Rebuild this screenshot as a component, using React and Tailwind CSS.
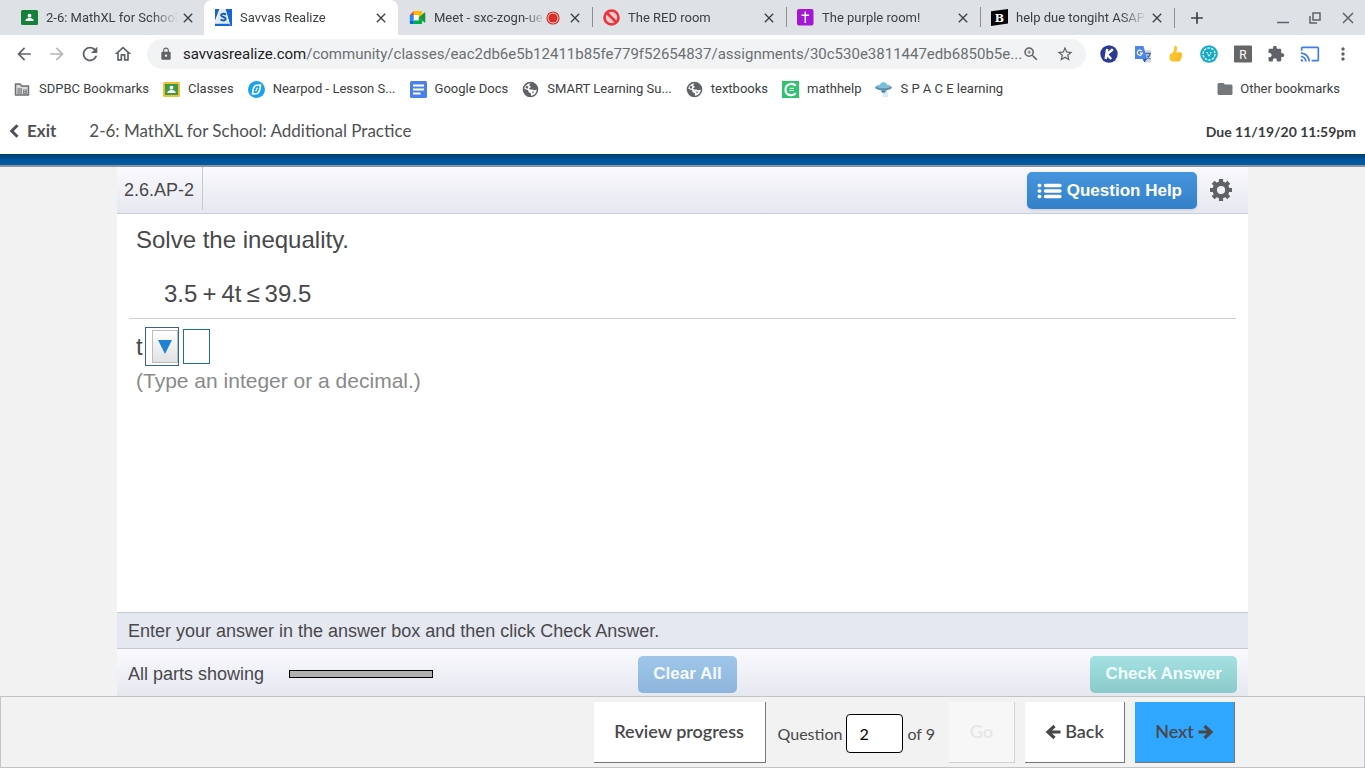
import React from "react";
import {
  MdArrowBack, MdArrowForward, MdRefresh, MdOutlineHome, MdLock, MdZoomIn, MdStarBorder,
  MdExtension, MdCast, MdMoreVert, MdFolder, MdClose, MdAdd,
} from "react-icons/md";

const Classroom = ({ bg = "#15803c", border = "#15803c" }) => (
  <svg viewBox="0 0 17 17" className="h-[17px] w-[17px] shrink-0">
    <rect x="0" y="1" width="17" height="15" rx="1.5" fill={border} />
    <rect x="2" y="3" width="13" height="11" fill={bg} />
    <circle cx="8.5" cy="6.7" r="1.9" fill="#fff" />
    <path d="M4.3 12c0-2.2 2.2-2.9 4.2-2.9s4.2.7 4.2 2.9z" fill="#fff" />
  </svg>
);

const SavvasIcon = () => (
  <svg viewBox="0 0 17 17" className="h-[17px] w-[17px] shrink-0">
    <path d="M0 0h4.500L0 12zM10.500 0H17v17h-1.500zM0 14.500h14l1.500 2.500H0z" fill="#1565d8" />
    <path d="M4.500 0h6l4 14.500H0V12z" fill="#e3edfc" />
    <path d="M11 5.600C9 4.200 6 4.800 6.200 6.500s4.500 1.200 4.500 3.200-3 2.300-5.200.8" fill="none" stroke="#1458c0" strokeWidth="2" />
  </svg>
);

const MeetIcon = () => (
  <svg viewBox="0 0 17 17" className="h-[17px] w-[17px] shrink-0">
    <path d="M4.800 2v4H.8z" fill="#ea4335" />
    <path d="M.8 6h4v5.500h-4z" fill="#2684fc" />
    <path d="M.8 11.500h4v3.500H2a1.200 1.200 0 0 1-1.200-1.200z" fill="#0066da" />
    <path d="M4.800 6h5v5.500h-5z" fill="#fff" />
    <path d="M4.800 2h7.200a1.200 1.200 0 0 1 1.200 1.200v3L9.800 9V6h-5z" fill="#ffba00" />
    <path d="M4.800 11.500h5V8.500l3.400 3v2.300A1.200 1.200 0 0 1 12 15H4.800z" fill="#00ac47" />
    <path d="M9.800 8.500l5.700-5c.4-.3.8 0 .8.400v9.200c0 .5-.5.700-.8.400z" fill="#12953f" />
  </svg>
);

const NoEntryIcon = () => (
  <svg viewBox="0 0 17 17" className="h-[17px] w-[17px] shrink-0">
    <circle cx="8.500" cy="8.500" r="7" fill="#eccdd1" stroke="#ee3338" strokeWidth="2.600" />
    <path d="M3.500 3.500l10 10" stroke="#ee3338" strokeWidth="2.600" />
  </svg>
);

const CrossIcon = () => (
  <svg viewBox="0 0 17 17" className="h-[17px] w-[17px] shrink-0">
    <rect width="16.500" height="16.500" rx="2" fill="#a416d6" />
    <path d="M8.300 2.500v11.500M4.500 6.200h7.600" stroke="#fff" strokeWidth="1.500" />
  </svg>
);

const BrainlyIcon = () => (
  <svg viewBox="0 0 17 17" className="h-[17px] w-[17px] shrink-0">
    <path d="M0 2.200L17 0v14.500L0 17z" fill="#050505" />
    <text x="8.500" y="12.500" textAnchor="middle" fontFamily="DejaVu Serif, serif" fontWeight="700" fontSize="11" fill="#fff">B</text>
  </svg>
);

const FolderManaged = () => (
  <svg viewBox="0 0 17 17" className="h-[17px] w-[17px] shrink-0">
    <path d="M1.500 3H6l1.700 2h6.800v9H1.500z" fill="#d9dadc" stroke="#6b6e72" strokeWidth="1.500" strokeLinejoin="round" />
    <path d="M3.500 7h4.500v6h-4.500zM9 8.500h4V13H9z" fill="#85888c" />
    <path d="M5 7.500v5M6.800 7.500v5M10.800 9v3.500" stroke="#e8e8e8" strokeWidth=".8" strokeDasharray="1 1" />
  </svg>
);

const NearpodIcon = () => (
  <svg viewBox="0 0 17 17" className="h-[17px] w-[17px] shrink-0">
    <circle cx="8.500" cy="8.500" r="8.500" fill="#17a3f0" />
    <path d="M7.200 4.500L12.600 4l-1 5.500-2 3L4.400 13l1-5.500z" fill="none" stroke="#fff" strokeWidth="1.600" strokeLinejoin="round" />
    <path d="M9.300 6.700L7.700 10.300" stroke="#fff" strokeWidth="1.200" />
  </svg>
);

const DocsIcon = () => (
  <svg viewBox="0 0 17 17" className="h-[17px] w-[17px] shrink-0">
    <rect width="17" height="17" rx="1.500" fill="#4a80ec" />
    <path d="M3 4.500h11M3 8.500h11M3 12.500h7.500" stroke="#fff" strokeWidth="1.900" />
  </svg>
);

const GlobeIcon = () => (
  <svg viewBox="0 0 17 17" className="h-[17px] w-[17px] shrink-0">
    <circle cx="8.500" cy="8.500" r="7.800" fill="#5f6368" />
    <path d="M9 2.500c-1 .3-1.800 1-1.700 1.900.2 1 1.400.6 1.600 1.400.1.700-1.100.9-1.600 1.400-.5.500 0 1.200.8 1.200h2.200c1 0 1.200.9 2 .9.900 0 1.300-.6 2.400-.6-.1 2.800-2.300 5.600-5.600 6-.5-.7.200-1.500-.2-2.200-.5-.8-2-.5-2.300-1.500-.2-.8-.1-1.500-.9-2L2.300 7.700C2.700 4.800 5.500 2 9 2.500z" fill="#fff" />
    <path d="M4.500 4.500l2 1.200-1 2-2-.8zM10 10.500l2 .3-1 2z" fill="#5f6368" />
  </svg>
);

const MathHelpIcon = () => (
  <svg viewBox="0 0 17 17" className="h-[17px] w-[17px] shrink-0">
    <rect width="17" height="17" fill="#2cc46c" />
    <path d="M13.800 4.800C10.500 1.300 3.500 3 3.500 8.700s6.500 7 10.300 3.600" fill="none" stroke="#fff" strokeWidth="2.200" />
    <path d="M7.500 7.300h4.500M7.500 9.500h4.500" stroke="#fff" strokeWidth="1" />
  </svg>
);

const UfoIcon = () => (
  <svg viewBox="0 0 17 17" className="h-[17px] w-[17px] shrink-0">
    <path d="M6 8h6l1 8H8z" fill="#d6ebf5" />
    <ellipse cx="8.500" cy="6.500" rx="8.300" ry="3" fill="#5790ac" />
    <ellipse cx="8.500" cy="5.300" rx="7" ry="1.900" fill="#8bbbd0" />
    <path d="M5 4.600C5 .2 12 .2 12 4.600c-1.500 1.200-5.500 1.200-7 0z" fill="#69c3e8" />
    <path d="M6 9.500h5l-1 2H7z" fill="#3c7795" />
  </svg>
);

const KamiIcon = () => (
  <svg viewBox="0 0 18 18" className="h-[18px] w-[18px]">
    <circle cx="9" cy="9" r="8.700" fill="#2c3a96" />
    <path d="M7.200 4L5.700 14M12.800 4.200L6.800 9.300l4.400 4.700" fill="none" stroke="#fff" strokeWidth="2.500" />
  </svg>
);

const TranslateIcon = () => (
  <svg viewBox="0 0 18 18" className="h-[18px] w-[18px]">
    <path d="M8 5h9v12.500h-6z" fill="#d6d9dd" />
    <path d="M11 8.500h6M14 7.500v1.500M16 9c-.5 2.500-2 4-3.500 5M13 10.500c1 2 2 3 3.500 3.500" stroke="#4a6fae" strokeWidth="1.300" fill="none" />
    <path d="M1 1h8.500L13 14H1z" fill="#4a86e8" />
    <path d="M8.500 14H13l-2.500 3.500z" fill="#2a5fc0" />
    <path d="M7.700 6A2.500 2.500 0 1 0 8.300 8.200H6" fill="none" stroke="#fff" strokeWidth="1.200" />
  </svg>
);

const ThumbIcon = () => (
  <svg viewBox="0 0 18 18" className="h-[18px] w-[18px]">
    <path d="M3 9C6 8.500 7.200 5.500 7.200 2c0-1.700 2.600-1.600 2.800.6.100 1.600-.4 3.400-.6 4.700h4.300c1.800 0 2 2 .9 2.600 1 .7.700 2.100-.3 2.500.6.900.1 1.900-.8 2.200.3 1.200-.5 1.900-1.700 1.900H6.500C3.500 16.500 2.500 15 2.500 12.500z" fill="#fcc42c" />
    <path d="M9.800 9.800h4.500M9.800 12.400h4M9.500 14.600h3.500" stroke="#f0a92a" strokeWidth=".7" />
  </svg>
);

const TealIcon = () => (
  <svg viewBox="0 0 18 18" className="h-[18px] w-[18px]">
    <circle cx="9" cy="9" r="8.800" fill="#18aac4" />
    <circle cx="9" cy="9" r="6" fill="none" stroke="#c5eff5" strokeWidth="1.500" strokeDasharray="2.600 1.100" />
    <path d="M6 7h6L9 12z" fill="#c5eff5" />
    <circle cx="9" cy="8.300" r="1.300" fill="#18aac4" />
  </svg>
);

const ReadIcon = () => (
  <svg viewBox="0 0 18 18" className="h-[18px] w-[18px]">
    <rect y=".5" width="18" height="17" rx="1" fill="#666" />
    <text x="9" y="13.500" textAnchor="middle" fontFamily="Roboto, sans-serif" fontSize="12" fill="#fff">R</text>
  </svg>
);

const RecordDot = () => (
  <svg viewBox="0 0 14 14" className="h-[14px] w-[14px] shrink-0">
    <circle cx="7" cy="7" r="6" fill="none" stroke="#d93025" strokeWidth="1.200" />
    <circle cx="7" cy="7" r="4.600" fill="#d93025" />
  </svg>
);

const GearIcon = () => (
  <svg viewBox="0 0 24 24" className="h-6 w-6">
    <circle cx="12" cy="12" r="6.300" fill="none" stroke="currentColor" strokeWidth="4.400" />
    <path d="M12 1v3.500M12 19.500V23M1 12h3.500M19.500 12H23M4.200 4.200l2.500 2.500M17.300 17.300l2.500 2.500M19.800 4.200l-2.500 2.500M6.700 17.300l-2.500 2.500" stroke="currentColor" strokeWidth="4.200" />
  </svg>
);

const ArrowIcon = ({ d }) => (
  <svg viewBox="0 0 16 16" className="h-4 w-4 shrink-0">
    <path d={d} fill="none" stroke="currentColor" strokeWidth="3.200" />
  </svg>
);

const tabs = [
  { title: "2-6: MathXL for School", icon: <Classroom /> },
  { title: "Savvas Realize", icon: <SavvasIcon />, active: true },
  { title: "Meet - sxc-zogn-ue", icon: <MeetIcon />, recording: true },
  { title: "The RED room", icon: <NoEntryIcon />, divider: true },
  { title: "The purple room!", icon: <CrossIcon />, divider: true },
  { title: "help due tongiht ASAP", icon: <BrainlyIcon />, divider: true },
];

const bookmarks = [
  { title: "SDPBC Bookmarks", icon: <FolderManaged /> },
  { title: "Classes", icon: <Classroom bg="#3c9a48" border="#f2bd2e" /> },
  { title: "Nearpod - Lesson S...", icon: <NearpodIcon /> },
  { title: "Google Docs", icon: <DocsIcon /> },
  { title: "SMART Learning Su...", icon: <GlobeIcon /> },
  { title: "textbooks", icon: <GlobeIcon /> },
  { title: "mathhelp", icon: <MathHelpIcon /> },
  { title: "S P A C E learning", icon: <UfoIcon /> },
];

const extensions = [
  { name: "Kami", icon: <KamiIcon /> },
  { name: "Translate", icon: <TranslateIcon /> },
  { name: "Thumbs up", icon: <ThumbIcon /> },
  { name: "Reader tools", icon: <TealIcon /> },
  { name: "Read", icon: <ReadIcon /> },
  { name: "Extensions", icon: <MdExtension className="h-[18px] w-[18px]" /> },
  { name: "Cast", icon: <MdCast className="h-5 w-5 text-[#3f7de8]" /> },
  { name: "Menu", icon: <MdMoreVert className="h-5 w-5" /> },
];

function Tab({ title, icon, active, recording, divider }) {
  return (
    <div className={active ? "flex h-full w-[194px] items-center rounded-t-lg bg-white pr-[9px] pl-[11px]" : "relative flex h-full w-[194px] items-center pr-[9px] pl-[11px]"}>
      {divider && <span className="absolute top-[7px] left-0 h-5 w-px bg-[#8d9196]" />}
      {icon}
      <span className="ml-2 flex-1 [mask-image:linear-gradient(to_right,black_80%,transparent)] text-[13px] whitespace-nowrap text-[#3c4043]">{title}</span>
      {recording && <RecordDot />}
      <button aria-label={"Close " + title} className={recording ? "ml-[7px] text-[#3c4043]" : "ml-0.5 text-[#3c4043]"}><MdClose className="h-4 w-4" /></button>
    </div>
  );
}

function Browser() {
  return (
    <div className="font-[Roboto,sans-serif] text-[#3c4043]">
      <div className="flex h-[35px] items-center bg-[#dee1e6] pl-[10px]">
        {tabs.map((t) => <Tab key={t.title} {...t} />)}
        <div className="flex h-5 flex-1 items-center border-l border-[#8d9196] pl-3">
          <button aria-label="New tab"><MdAdd className="h-5 w-5" /></button>
        </div>
        <div className="flex items-center gap-[19px] pr-2.5 text-[#5f6368]">
          <button aria-label="Minimize"><svg viewBox="0 0 12 12" className="h-3 w-3"><path d="M0 10.500h12" stroke="currentColor" strokeWidth="1.500" /></svg></button>
          <button aria-label="Restore"><svg viewBox="0 0 14 14" className="h-[14px] w-[14px]"><path d="M5 2h7v7H5zM2 5v7h7" fill="none" stroke="currentColor" strokeWidth="1.500" /></svg></button>
          <button aria-label="Close window"><svg viewBox="0 0 14 14" className="h-[14px] w-[14px]"><path d="M2 2l10 10M12 2L2 12" stroke="currentColor" strokeWidth="1.500" /></svg></button>
        </div>
      </div>
      <div className="flex h-[38px] items-center bg-white pr-[11px] pl-[7px] text-[#5f6368]">
        <button aria-label="Back" className="flex w-[33px] shrink-0 justify-center"><MdArrowBack className="h-5 w-5" /></button>
        <button aria-label="Forward" className="flex w-[33px] shrink-0 justify-center text-[#b5b7ba]"><MdArrowForward className="h-5 w-5" /></button>
        <button aria-label="Reload" className="flex w-[33px] shrink-0 justify-center"><MdRefresh className="h-[22px] w-[22px]" /></button>
        <button aria-label="Home" className="flex w-[33px] shrink-0 justify-center"><MdOutlineHome className="h-5 w-5" /></button>
        <div className="ml-2 flex h-[30px] flex-1 items-center rounded-full bg-[#f1f3f4] px-3">
          <MdLock className="h-[14px] w-[14px] shrink-0" />
          <span className="ml-2.5 flex-1 text-[15px] whitespace-nowrap text-[#6b6f73]"><span className="text-[#202124]">savvasrealize.com</span>/community/classes/eac2db6e5b12411b85fe779f52654837/assignments/30c530e3811447edb6850b5e...</span>
          <button aria-label="Zoom"><MdZoomIn className="h-[18px] w-[18px]" /></button>
          <button aria-label="Bookmark this page" className="ml-4"><MdStarBorder className="h-[18px] w-[18px]" /></button>
        </div>
        <div className="ml-2.5 flex w-[260px] shrink-0 items-center justify-between">
          {extensions.map((e) => <button key={e.name} aria-label={e.name} className="flex w-[26px] justify-center">{e.icon}</button>)}
        </div>
      </div>
      <nav className="flex h-8 items-center gap-[14px] bg-white pr-[25px] pl-[14px] text-[13px]">
        {bookmarks.map((b) => (
          <a key={b.title} href="#" className="flex items-center gap-2 whitespace-nowrap">{b.icon}{b.title}</a>
        ))}
        <a href="#" className="ml-auto flex items-center gap-1.5 whitespace-nowrap"><MdFolder className="h-[18px] w-[18px] text-[#75787b]" />Other bookmarks</a>
      </nav>
    </div>
  );
}

function Question() {
  return (
    <main className="flex flex-1 flex-col px-[117px] font-['Liberation_Sans',Arial,sans-serif] text-[#48484b]">
      <div className="flex h-[47px] items-center border-b border-[#c8ccd6] bg-gradient-to-b from-[#fafafe] to-[#e6e8f0]">
        <h1 className="mb-[3px] flex h-[43px] items-center border-r border-[#c4c8d0] pt-1 pr-2 pl-[7px] text-[18px]">2.6.AP-2</h1>
        <button className="ml-auto flex h-[37px] items-center gap-[5px] rounded-[5px] bg-gradient-to-b from-[#4795dd] to-[#3280c8] pt-0.5 pr-[15px] pl-2.5 text-[17px] font-bold text-white shadow">
          <svg viewBox="0 0 25 17" className="h-[17px] w-[25px]">
            <path d="M2.200 2.500h.6M2.200 8h.6M2.200 13.500h.6M8.500 2.500h14.500M8.500 8h14.500M8.500 13.500h14.500" stroke="currentColor" strokeWidth="3.400" strokeLinecap="round" />
          </svg>
          Question Help
        </button>
        <button aria-label="Settings" className="mr-[15px] ml-3 text-[#606163]"><GearIcon /></button>
      </div>
      <div className="flex-1 bg-white px-3 pt-3">
        <div className="border-b border-[#cfcfcf] px-[7px] pb-2.5 text-[24px] leading-7">
          <p>Solve the inequality.</p>
          <p className="mt-[26px] flex gap-[5px] pl-7"><span>3.5</span><span>+</span><span>4t</span><span>≤</span><span>39.5</span></p>
        </div>
        <div className="px-[7px] pt-2">
          <div className="flex items-center text-[24px]">
            <span>t</span>
            <div className="relative ml-0.5">
              <select aria-label="Inequality symbol" className="block h-[39px] w-[34px] appearance-none border border-[#3b5f8e] bg-white text-transparent">
                <option></option><option>&lt;</option><option>≤</option><option>&gt;</option><option>≥</option>
              </select>
              <span className="pointer-events-none absolute inset-y-[3px] right-px flex w-[26px] items-center justify-center border border-[#bcbcc4] bg-gradient-to-b from-white to-[#e2e2e4]">
                <svg viewBox="0 0 14 14" className="h-[14px] w-[14px]"><path d="M0 0h14L7 14z" fill="#1f82d6" /></svg>
              </span>
            </div>
            <input aria-label="Answer" className="ml-1 h-[35px] w-[27px] border border-[#217089] bg-white text-center" />
          </div>
          <p className="mt-px text-[21px] leading-7 text-[#8a8a8a]">(Type an integer or a decimal.)</p>
        </div>
      </div>
      <div className="flex h-[37px] items-center border-y border-[#c6cad2] bg-[#e5e8f1] px-[11px] pt-0.5 text-[18px]">Enter your answer in the answer box and then click Check Answer.</div>
      <div className="grid h-[47px] grid-cols-3 items-center bg-gradient-to-b from-[#fafafe] to-[#e6e8f0] px-[11px] pt-[3px] text-[18px]">
        <div className="flex items-center gap-[25px]">All parts showing<span className="h-2 w-36 border border-black bg-[#b0b0b0]" /></div>
        <button className="ml-2.5 h-[37px] justify-self-center rounded-[5px] bg-gradient-to-b from-[#a0c7ea] to-[#8db5dc] px-[15px] text-[17px] font-bold text-[#f4f9ff]">Clear All</button>
        <button className="h-[37px] justify-self-end rounded-[5px] bg-gradient-to-b from-[#a5e1e2] to-[#8bcaca] px-[15px] text-[17px] font-bold text-[#f0ffff]">Check Answer</button>
      </div>
    </main>
  );
}

function Footer() {
  return (
    <footer className="flex h-[72px] items-center justify-end border border-[#c4c4c6] bg-[#f2f2f2] pr-[129px] font-[Lato,sans-serif] text-[16px] text-[#48484b]">
      <button className="h-[61px] w-[172px] border-r border-b border-[#777] bg-white text-[18px] font-semibold">Review progress</button>
      <label className="mt-[3px] ml-3 flex items-center gap-1">Question
        <input type="text" defaultValue="2" className="h-[39px] w-[57px] rounded border border-black bg-white px-3 text-black" />
      </label>
      <span className="mt-[3px] ml-1">of 9</span>
      <button disabled className="ml-3.5 h-[61px] w-[66px] border-r border-b border-[#d2d2d2] bg-[#f7f7f7] text-[18px] font-semibold text-[#e6e6e6]">Go</button>
      <button className="ml-2.5 flex h-[61px] w-[100px] items-center justify-center gap-1 border-r border-b border-[#777] bg-white text-[18px] font-semibold"><ArrowIcon d="M9.500 2L3 8l6.500 6M3 8h12.500" />Back</button>
      <button className="ml-2.5 flex h-[61px] w-[100px] items-center justify-center gap-1 border-r border-b border-[#777] bg-[#30a7fe] text-[18px] font-semibold">Next<ArrowIcon d="M6.500 2L13 8l-6.500 6M13 8H.5" /></button>
    </footer>
  );
}

export default function App() {
  return (
    <div className="flex min-h-screen flex-col bg-[#f2f2f2]">
      <Browser />
      <header className="flex h-[49px] items-center bg-white pt-[3px] pr-[9px] pl-[9px] font-[Lato,sans-serif] text-[17px] text-[#505154]">
        <a href="#" className="flex items-center gap-2 font-bold">
          <svg viewBox="0 0 10 14" className="h-[14px] w-[10px]"><path d="M8.500 1.200L2.700 7l5.800 5.800" fill="none" stroke="currentColor" strokeWidth="3" /></svg>
          Exit
        </a>
        <span className="ml-[33px]">2-6: MathXL for School: Additional Practice</span>
        <span className="ml-auto text-[14px] font-bold text-[#3b3c3e]">Due 11/19/20 11:59pm</span>
      </header>
      <div className="h-[13px] border-b-2 border-[#8f9399] bg-gradient-to-b from-[#003c66] via-[#00549a] to-[#005da6]" />
      <Question />
      <Footer />
    </div>
  );
}
